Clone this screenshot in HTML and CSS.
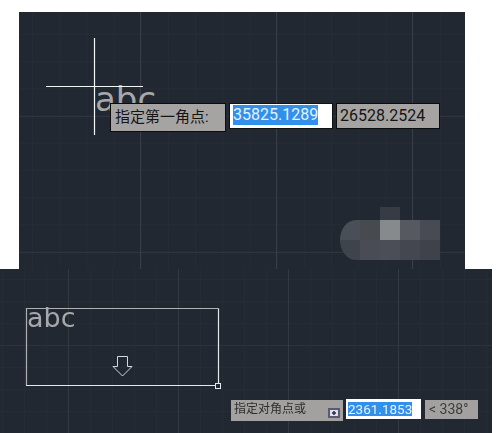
FILE: index.html
```html
<!DOCTYPE html>
<html lang="zh">
<head>
<meta charset="utf-8">
<title>CAD</title>
<link rel="stylesheet" href="styles.css">
</head>
<body>
<section class="view view-top">
  <div class="draw-text draw-text-top">abc</div>
  <svg class="overlay" width="446" height="257" viewBox="0 0 446 257">
    <path d="M75.5 26V123M27 74.5H124" stroke="#f4f5f5" stroke-width="1.2" fill="none"/>
  </svg>
  <div class="tip tip-label">指定第一角点:</div>
  <div class="tip tip-input"><span class="sel">35825.1289</span></div>
  <div class="tip tip-value">26528.2524</div>
  <div class="mosaic">
    <i class="c0"></i><i class="c0"></i><i class="c1"></i><i class="c0"></i><i class="c0"></i>
    <i class="c2 round-tl"></i><i class="c3"></i><i class="c4"></i><i class="c5"></i><i class="c6"></i>
    <i class="c7 round-bl"></i><i class="c8"></i><i class="c9"></i><i class="c10"></i><i class="c11"></i>
  </div>
</section>
<section class="view view-bottom">
  <div class="draw-text draw-text-bottom">abc</div>
  <svg class="overlay" width="492" height="164" viewBox="0 0 492 164">
    <path d="M26.5 116V39.500H218.500" stroke="#aeb0b2" stroke-width="1.2" fill="none"/>
    <path d="M218.500 39.500V116M26 116.500H218" stroke="#e6e7e8" stroke-width="1.2" fill="none"/>
    <rect x="215.500" y="114.500" width="5" height="5" stroke="#e6e7e8" fill="#232833"/>
    <path d="M117.500 87.500H127.500V97.500H132L122.500 107L113 97.500H117.500Z" stroke="#d5d7d8" stroke-width="1" fill="none"/>
  </svg>
  <div class="tip2 tip2-label">指定对角点或<span class="drop"></span></div>
  <div class="tip2 tip2-input"><span class="sel">2361.1853</span></div>
  <div class="tip2 tip2-value">&lt; 338°</div>
</section>
</body>
</html>
```
FILE: styles.css
```css
* { box-sizing: border-box; }
html, body { margin: 0; background: #fff; }
body { width: 499px; height: 433px; overflow: hidden; padding-top: 12px; font-family: Roboto, "Noto Sans CJK SC", sans-serif; }

.view { position: relative; overflow: hidden; background-color: #222832; }
.view-top {
  width: 446px; height: 257px; margin-left: 19px;
  background-image:
    linear-gradient(90deg, #383d47 1px, transparent 1px),
    linear-gradient(#2f343e 1px, transparent 1px),
    linear-gradient(90deg, #262b35 1px, transparent 1px),
    linear-gradient(#262b35 1px, transparent 1px);
  background-size: 136px 100%, 100% 136px, 27.2px 100%, 100% 27.2px;
  background-position: 121px 0, 0 104px, 13px 0, 0 22px;
}
.view-bottom {
  width: 492px; height: 164px;
  background-image:
    linear-gradient(90deg, #333842 1px, transparent 1px),
    linear-gradient(#2d323c 1px, transparent 1px),
    linear-gradient(90deg, #262b35 1px, transparent 1px),
    linear-gradient(#262b35 1px, transparent 1px);
  background-size: 110px 100%, 100% 110px, 22px 100%, 100% 22px;
  background-position: 68px 0, 0 76px, 2px 0, 0 10px;
}
.overlay { position: absolute; left: 0; top: 0; }

.draw-text { position: absolute; color: #a6a8aa; font-family: "DejaVu Sans", sans-serif; font-weight: 400; line-height: 1; }
.draw-text-top { left: 76px; top: 70px; font-size: 34px; }
.draw-text-bottom { left: 27px; top: 35px; font-size: 27px; filter: blur(0.3px); }

.tip { position: absolute; top: 91px; height: 26px; border: 1px solid #0c0c0c; color: #151515; font-size: 16px; line-height: 24px; background: #a6a4a2; white-space: nowrap; }
.tip-label { left: 91px; width: 116px; height: 29px; padding-left: 4px; font-size: 15px; line-height: 27px; }
.tip-input { left: 210px; width: 104px; background: #fff; border-color: #111; padding: 1px 0 0 3px; line-height: 20px; }
.tip-value { left: 317px; width: 104px; padding-left: 3px; line-height: 24px; }
.sel { display: inline-block; background: #3390ea; color: #e6f2ff; }

.mosaic { position: absolute; left: 321px; top: 195px; display: grid; grid-template-columns: repeat(5, 20px); grid-template-rows: 13px 20px 20px; }
.mosaic .c1 { background: #373b44; }
.c2 { background: #4a4e57; } .c3 { background: #474b50; } .c4 { background: #868a8d; } .c5 { background: #565960; } .c6 { background: #484b54; }
.c7 { background: #3f434c; } .c8 { background: #494c54; } .c9 { background: #4b4e57; } .c10 { background: #44474f; } .c11 { background: #3f424b; }
.round-tl { border-top-left-radius: 16px 20px; }
.round-bl { border-bottom-left-radius: 16px 20px; }

.tip2 { position: absolute; white-space: nowrap; filter: blur(0.3px); }
.tip2-label { left: 231px; top: 131px; width: 112px; height: 21px; background: #a2a19f; color: #2d2d2d; font-size: 12px; line-height: 19px; padding-left: 3px; }
.drop { position: absolute; left: 97px; top: 8px; width: 12px; height: 10px; background: radial-gradient(circle, #3b3b55 1.5px, #dfe0ea 2px); border: 2px solid #5a5a72; }
.tip2-input { left: 346px; top: 130px; width: 75px; height: 20px; background: #fff; padding: 3px 0 0 2px; font-size: 13.500px; line-height: 14px; }
.tip2-value { left: 425px; top: 131px; width: 53px; height: 19px; background: #a2a19f; color: #3c3c3c; font-size: 14px; line-height: 19px; padding-left: 4px; }
```
